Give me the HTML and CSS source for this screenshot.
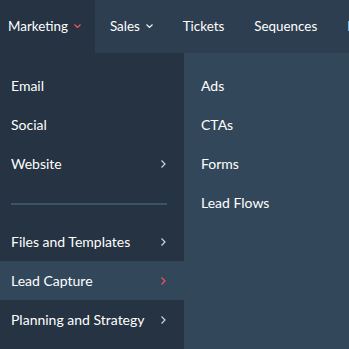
FILE: index.html
```html
<!DOCTYPE html>
<html lang="en">
<head>
<meta charset="UTF-8">
<meta name="viewport" content="width=device-width, initial-scale=1.0">
<title>Navigation</title>
<link rel="stylesheet" href="styles.css">
</head>
<body>

<nav class="navbar">
  <div class="nav-item active">Marketing
    <svg class="caret" width="7" height="4" viewBox="0 0 7 4"><polyline points="0.5,0.5 3.5,3.5 6.5,0.5"/></svg>
  </div>
  <div class="nav-item">Sales
    <svg class="caret" width="7" height="4" viewBox="0 0 7 4"><polyline points="0.5,0.5 3.5,3.5 6.5,0.5"/></svg>
  </div>
  <div class="nav-item">Tickets</div>
  <div class="nav-item">Sequences</div>
  <div class="nav-item">Feedback</div>
</nav>

<div class="dropdown">
  <ul class="menu">
    <li>Email</li>
    <li>Social</li>
    <li>Website <svg class="chevron" width="5" height="8" viewBox="0 0 5 8"><polyline points="0.5,0.5 4,4 0.5,7.5"/></svg></li>
    <li class="divider"></li>
    <li>Files and Templates <svg class="chevron" width="5" height="8" viewBox="0 0 5 8"><polyline points="0.5,0.5 4,4 0.5,7.5"/></svg></li>
    <li class="selected">Lead Capture <svg class="chevron" width="5" height="8" viewBox="0 0 5 8"><polyline points="0.5,0.5 4,4 0.5,7.5"/></svg></li>
    <li>Planning and Strategy <svg class="chevron" width="5" height="8" viewBox="0 0 5 8"><polyline points="0.5,0.5 4,4 0.5,7.5"/></svg></li>
  </ul>
  <ul class="submenu">
    <li>Ads</li>
    <li>CTAs</li>
    <li>Forms</li>
    <li>Lead Flows</li>
  </ul>
</div>

</body>
</html>
```

FILE: styles.css
```css
body {
  margin: 0;
  width: 349px;
  height: 349px;
  overflow: hidden;
  font-family: Lato, "Open Sans", sans-serif;
  font-size: 14px;
  color: #fff;
  background-color: #33475b;
}
.navbar {
  display: flex;
  height: 53px;
  overflow: hidden;
  background-color: #2d3e50;
  white-space: nowrap;
  font-size: 13.4px;
}
.nav-item {
  display: flex;
  align-items: center;
  flex-shrink: 0;
  padding: 0 15px 2px;
}
.nav-item.active {
  padding: 0 14px 2px 8px;
  background-color: #253342;
}
.caret {
  margin-left: 6px;
  fill: none;
  stroke: #eaf0f6;
  stroke-width: 1.2;
}
.active .caret {
  stroke: #f2545b;
}
.dropdown {
  display: flex;
  height: 296px;
}
.menu,
.submenu {
  list-style: none;
  margin: 0;
}
.menu {
  width: 184px;
  padding: 13px 0 0;
  background-color: #253342;
}
.submenu {
  flex: 1;
  padding: 13px 0 0;
  background-color: #33475b;
}
.menu li,
.submenu li {
  display: flex;
  align-items: center;
  justify-content: space-between;
  height: 39px;
  padding: 0 18px 0 11px;
}
.submenu li {
  padding-left: 17px;
}
.menu li.divider {
  height: 39px;
  padding: 0;
  margin: 0 17px 0 11px;
  position: relative;
}
.menu li.divider::after {
  content: "";
  position: absolute;
  left: 0;
  right: 0;
  top: 20px;
  height: 2px;
  background-color: #3b5468;
}
.menu li.selected {
  background-color: #33475b;
}
.chevron {
  fill: none;
  stroke: #cbd6e2;
  stroke-width: 1.2;
}
.selected .chevron {
  stroke: #f2545b;
}
```
